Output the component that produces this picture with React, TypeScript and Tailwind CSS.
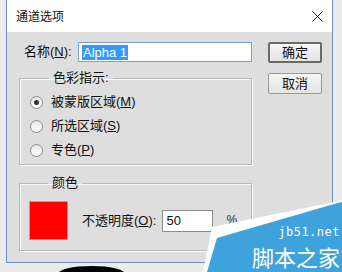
import type { ReactNode } from 'react'

const FONT = "font-['Liberation_Sans','Noto_Sans_CJK_SC',sans-serif]"

function Radio({ checked, label, hotkey }: { checked?: boolean; label: string; hotkey: string }) {
  return (
    <div className="flex items-center h-[24px]">
      <span className="w-[13px] h-[13px] rounded-full border border-[#8a8a8a] bg-gradient-to-b from-[#e6e6e6] to-[#ffffff] flex items-center justify-center">
        {checked && <span className="w-[5px] h-[5px] rounded-full bg-[#333]" />}
      </span>
      <span className="ml-[8px] text-[13px] leading-[16px] text-[#111]">
        {label}(<span className="underline">{hotkey}</span>)
      </span>
    </div>
  )
}

function Group({ title, className, children }: { title: string; className?: string; children: ReactNode }) {
  return (
    <fieldset className={`border border-[#b8b8b8] shadow-[1px_1px_0_#fafafa,inset_1px_1px_0_#fafafa] ${className ?? ''}`}>
      <legend className="ml-[19px] px-[4px] text-[13px] leading-[16px] text-[#111]">{title}</legend>
      {children}
    </fieldset>
  )
}

function Button({ label, primary }: { label: string; primary?: boolean }) {
  return (
    <button
      className={`w-[54px] h-[21px] text-[13px] leading-[16px] text-[#111] bg-gradient-to-b from-[#f6f6f6] to-[#e4e4e4] rounded-[2px] ${
        primary ? 'border-2 border-[#6a6a6a]' : 'border border-[#9a9a9a]'
      }`}
    >
      {label}
    </button>
  )
}

export default function App() {
  return (
    <div className={`relative w-[342px] h-[272px] overflow-hidden bg-[#ececec] ${FONT}`}>
      <div className="ml-[6px] -mt-px w-[327px] h-[264px] border border-[#6d8fc6] flex flex-col">
        <div className="h-[32px] bg-white flex items-center pl-[9px] pt-px">
          <span className="text-[12px] leading-[16px] text-[#111]">通道选项</span>
          <svg className="ml-auto mr-[9px]" width="11" height="11" viewBox="0 0 11 11">
            <path d="M0.5 0.5L10.5 10.5M10.5 0.5L0.5 10.5" stroke="#222" strokeWidth="1" />
          </svg>
        </div>

        <div className="flex-1 bg-[#dedede] flex pl-[12px] pt-[10px]">
          <div className="w-[233px] flex flex-col">
            <div className="flex items-center h-[20px]">
              <span className="ml-[5px] text-[13px] leading-[16px] text-[#111]">
                名称(<span className="underline">N</span>):
              </span>
              <div className="ml-auto w-[174px] h-[20px] bg-white border border-[#7ea0cf] flex items-center pl-[3px]">
                <span className="bg-[#3399ff] text-white text-[13px] leading-[15px] px-px">Alpha 1</span>
              </div>
            </div>

            <Group title="色彩指示:" className="mt-[8px] h-[95px] pl-[10px] pt-[4px]">
              <Radio checked label="被蒙版区域" hotkey="M" />
              <Radio label="所选区域" hotkey="S" />
              <Radio label="专色" hotkey="P" />
            </Group>

            <Group title="颜色" className="mt-[10px] h-[76px] pl-[9px] pt-[10px]">
              <div className="flex items-center">
                <div className="w-[39px] h-[39px] bg-[#ff0000] border border-[#a9a0a0]" />
                <span className="ml-[14px] text-[13px] leading-[16px] text-[#111]">
                  不透明度(<span className="underline">O</span>):
                </span>
                <div className="ml-[6px] w-[51px] h-[22px] bg-white border border-[#8c8c8c] flex items-center pl-[3px]">
                  <span className="text-[13px] leading-[15px] text-[#111]">50</span>
                </div>
                <span className="ml-[13px] text-[12px] leading-[15px] text-[#333]">%</span>
              </div>
            </Group>
          </div>

          <div className="ml-[16px] flex flex-col items-center gap-[10px]">
            <Button label="确定" primary />
            <Button label="取消" />
          </div>
        </div>
      </div>

      <div className="absolute left-[58px] bottom-[-10px] w-[67px] h-[16px] rounded-[50%] bg-black" />

      <svg className="absolute inset-0 pointer-events-none" width="342" height="272" viewBox="0 0 342 272">
        <polygon points="203,272 212,227 334,202 342,201 342,272" fill="#ffffff" />
        <polygon points="207,272 217,238 334,204 342,202 342,272" fill="#3ea3dc" />
      </svg>
      <div className="absolute right-[2px] top-[226px] flex flex-col items-end gap-[5px] pointer-events-none">
        <span className="text-[12px] leading-[13px] text-white font-['DejaVu_Sans_Mono',monospace] tracking-[0.5px]">jb51.net</span>
        <span className="text-[22px] leading-[24px] text-white font-['Noto_Sans_CJK_SC',sans-serif]">脚本之家</span>
      </div>
    </div>
  )
}
